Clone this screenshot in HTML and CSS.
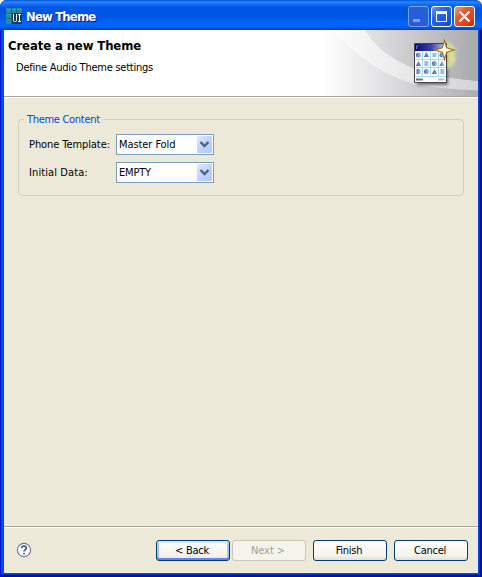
FILE: index.html
```html
<!DOCTYPE html>
<html lang="en">
<head>
<meta charset="utf-8">
<title>New Theme</title>
<link rel="stylesheet" href="styles.css">
</head>
<body>
<div class="window">
  <header class="titlebar">
    <svg class="app-icon" width="17" height="17" viewBox="0 0 17 17">
      <rect width="16" height="16" rx="1" fill="#238da2"/>
      <path d="M0 5.500H16M0 10.500H6M5.500 0V16M10.500 0V5" stroke="#176e89" fill="none"/>
      <path d="M1 1.500h4M6.500 1.500h3M11.500 1.500h3M1 6.500h4" stroke="#3ca5b5"/>
      <rect x="6" y="5" width="10" height="11" fill="#123a5c"/>
      <path d="M7.500 6v6.500q0 1 1 1h1q1 0 1-1V6M12 6.500h3M13.500 6.500v7M12 13.500h3" stroke="#fff" fill="none"/>
    </svg>
    <h1 class="title">New Theme</h1>
    <div class="controls">
      <span class="control minimize"><svg width="21" height="21"><path d="M5 14.500h7" stroke="#7ba2f5" stroke-width="3"/></svg></span>
      <span class="control"><svg width="21" height="21"><path d="M5.500 5.500h10v10h-10z" fill="none" stroke="#fff"/><path d="M5 6.500h11" stroke="#fff" stroke-width="3"/></svg></span>
      <span class="control close"><svg width="21" height="21"><path d="M5.500 5.500l10 10M15.500 5.500l-10 10" stroke="#fff" stroke-width="2.200"/></svg></span>
    </div>
  </header>
  <main class="client">
    <section class="banner">
      <svg class="banner-art" width="154" height="66" viewBox="0 0 154 66">
        <defs>
          <linearGradient id="sky" gradientUnits="userSpaceOnUse" x1="0" y1="0" x2="154" y2="0"><stop offset="0" stop-color="#fff"/><stop offset=".28" stop-color="#e3e3e4"/><stop offset=".6" stop-color="#c7c7ca"/><stop offset="1" stop-color="#a9aaae"/></linearGradient>
          <linearGradient id="low" gradientUnits="userSpaceOnUse" x1="0" y1="0" x2="154" y2="0"><stop offset="0" stop-color="#fff"/><stop offset=".4" stop-color="#e0e0e2"/><stop offset="1" stop-color="#acadb1"/></linearGradient>
          <linearGradient id="band" gradientUnits="userSpaceOnUse" x1="0" y1="0" x2="154" y2="0"><stop offset="0" stop-color="#fff"/><stop offset=".45" stop-color="#ededee"/><stop offset="1" stop-color="#d3d3d6"/></linearGradient>
          <linearGradient id="bar"><stop offset="0" stop-color="#08087b"/><stop offset=".5" stop-color="#3540a0"/><stop offset="1" stop-color="#c4cee9"/></linearGradient>
          <linearGradient id="shape"><stop offset="0" stop-color="#4569bd"/><stop offset="1" stop-color="#b8c6ea"/></linearGradient>
          <linearGradient id="key"><stop offset="0" stop-color="#666"/><stop offset="1" stop-color="#ccc"/></linearGradient>
          <filter id="soft" x="-50%" y="-50%" width="200%" height="200%"><feGaussianBlur stdDeviation="1.500"/></filter>
        </defs>
        <path d="M0 0H154V66H0z" fill="url(#low)"/>
        <path d="M0 0H41C51 17 64 27 91 39C112 47 135 49 154 51V60.500C130 59 108 58 91 54C69 48 52 38 39 28C26 18 14 6 8 0z" fill="url(#band)"/>
        <path d="M41 0H154V51C135 49 112 47 91 39C66 28 51 17 41 0z" fill="url(#sky)"/>
        <path d="M93 17h31v38H93z" fill="#222" opacity=".6" filter="url(#soft)"/>
        <path d="M121 12q8 1 11 8q-3 4 0 8q-1 8-10 12V25z" fill="#f0ef8b" opacity=".65" filter="url(#soft)"/>
        <path d="M90.500 13.500h32v39h-32z" fill="#fff" stroke="#414350"/>
        <path d="M91 14h31v7H91z" fill="url(#bar)"/>
        <path d="M92.500 19v-3h2" stroke="#7778ca" fill="none"/>
        <path d="M91 29.500h31M91 37.500h31M91 46.500h31M98.500 21v25M106.500 21v25M114.500 21v25" stroke="#a9d9ef" fill="none"/>
        <g fill="url(#shape)">
          <circle cx="94.500" cy="25" r="2.600"/><path d="M102.500 22l2.700 5h-5.400zM108.500 23h4v4h-4z"/><circle cx="118" cy="25" r="2.500"/>
          <path d="M94.500 31l2.700 5h-5.400zM100.500 31h4v5h-4z"/><circle cx="110.500" cy="33.500" r="2.600"/><path d="M118 31l2.700 5h-5.400z"/>
          <path d="M92.500 39h4v5h-4z"/><circle cx="102.500" cy="41.500" r="2.600"/><path d="M110.500 39l2.700 5h-5.400zM116.500 39h4v5h-4z"/>
        </g>
        <path d="M92 48.500h7v2h-7zM114 48.500h7v2h-7z" fill="url(#key)"/>
        <path d="M120.500 10.500l2.200 7.300 7.300 2.200-7.300 2.200-2.200 7.300-2.200-7.300L111 20l7.300-2.200z" fill="#fffde5" stroke="#a77314" stroke-width="1.200"/>
      </svg>
      <h2 class="heading">Create a new Theme</h2>
      <p class="description">Define Audio Theme settings</p>
    </section>
    <section class="content">
      <fieldset class="group">
        <legend class="legend">Theme Content</legend>
        <div class="row">
          <span class="label phone">Phone Template:</span>
          <div class="combo"><span class="value">Master Fold</span><i class="arrow"><svg width="15" height="17"><path d="M3.500 6l4 4 4-4" fill="none" stroke="#4d6185" stroke-width="2.400"/></svg></i></div>
        </div>
        <div class="row">
          <span class="label data">Initial Data:</span>
          <div class="combo"><span class="value caps">EMPTY</span><i class="arrow"><svg width="15" height="17"><path d="M3.500 6l4 4 4-4" fill="none" stroke="#4d6185" stroke-width="2.400"/></svg></i></div>
        </div>
      </fieldset>
    </section>
    <footer class="footer">
      <svg class="help" width="16" height="16" viewBox="0 0 16 16"><circle cx="8" cy="8" r="6.600" fill="#fff" stroke="#6d7d9d" stroke-width="1.200"/><path d="M5.700 6.300q0-2.100 2.300-2.100t2.300 1.900q0 1.100-1.200 1.800T8 9.500M8 10.800v1.700" fill="none" stroke="#4a5f88" stroke-width="1.700"/></svg>
      <button class="button default">&lt; Back</button>
      <button class="button next" disabled>Next &gt;</button>
      <button class="button">Finish</button>
      <button class="button">Cancel</button>
    </footer>
  </main>
</div>
</body>
</html>
```
FILE: styles.css
```css
* { box-sizing: border-box; }
body {
  margin: 0;
  background: #fff;
  font: 11px/14px "DejaVu Sans Condensed", "DejaVu Sans", sans-serif;
  letter-spacing: -.3px;
  color: #000;
}
svg { display: block; }
.window {
  width: 482px;
  height: 577px;
  padding: 0 4px 4px;
  display: flex;
  flex-direction: column;
  border-radius: 7px 7px 0 0;
  overflow: hidden;
  background: #0048e8;
  box-shadow: inset 1px 0 #0019cf, inset -2px -2px #00138c, inset -3px -3px #0030cc;
}
.titlebar {
  flex: 0 0 30px;
  margin: 0 -4px;
  padding: 2px 7px 0 6px;
  display: flex;
  align-items: center;
  background: linear-gradient(#0051d5 0, #2c87ff 2px, #1270f8 4px, #0055e5 8px, #0054e3 16px, #0064fb 23px, #0066ff 26px, #0053dd 28px, #003dd0 30px);
}
.title {
  margin: 1px 0 0 3px;
  color: #fff;
  font: bold 13px/16px "DejaVu Sans Condensed", sans-serif;
  letter-spacing: -.85px;
  text-shadow: 1px 1px #0a1883;
}
.controls { display: flex; gap: 2px; margin-left: auto; }
.control {
  width: 21px;
  height: 21px;
  border: 1px solid #fff;
  border-radius: 3px;
  background: linear-gradient(135deg, #6a98f6, #2865e4 35%, #1e59dc 70%, #1648b6);
}
.control svg { margin: -1px; }
.minimize { border-color: #799fee; background: #245edc; }
.close { background: linear-gradient(135deg, #f09a7d, #e35a35 35%, #d9431c 75%, #b42c0b); }
.client { flex: 1; display: flex; flex-direction: column; background: #ece9d8; }
.banner {
  position: relative;
  height: 67px;
  padding: 8px 0 0 4px;
  background: #fff;
  border-bottom: 1px solid #aca899;
}
.banner-art { position: absolute; right: 0; top: 0; }
.heading {
  margin: 0;
  font: bold 13px/16px "DejaVu Sans Condensed", sans-serif;
  letter-spacing: -.12px;
}
.description { margin: 7px 0 0 8px; letter-spacing: -.24px; }
.content { flex: 1; padding: 15px 14px 0; border-top: 1px solid #fff; }
.group {
  margin: 0;
  min-width: 0;
  height: 83px;
  border: 1px solid #d0d0bf;
  border-radius: 4px;
  padding: 9px 10px 0;
}
.legend { height: 12px; margin-left: -5px; padding: 0 3px; color: #0046d5; }
.row { display: flex; align-items: center; height: 21px; margin-bottom: 7px; }
.label { width: 87px; white-space: nowrap; }
.phone { letter-spacing: -.08px; }
.data { letter-spacing: .1px; }
.combo {
  width: 98px;
  height: 21px;
  display: flex;
  align-items: center;
  justify-content: space-between;
  padding: 0 1px 0 2px;
  border: 1px solid #7f9db9;
  background: #fff;
  white-space: nowrap;
}
.value { letter-spacing: -.08px; }
.caps { letter-spacing: -.2px; }
.arrow {
  width: 15px;
  height: 17px;
  border-radius: 1px;
  background: linear-gradient(135deg, #e1eaff, #c1d3fb 50%, #aec8f7);
}
.footer {
  height: 47px;
  display: flex;
  align-items: flex-start;
  padding: 12px 10px 0 12px;
  border-top: 1px solid #aca899;
  box-shadow: inset 0 1px #fff;
}
.help { margin: 3px 124px 0 0; }
.button {
  width: 74px;
  height: 21px;
  margin: 1px 0 0 7px;
  padding: 0 2px 0 0;
  border: 1px solid #003c74;
  border-radius: 3px;
  background: linear-gradient(#fff, #f5f4ee 75%, #e3dfd3);
  color: #000;
  font: inherit;
  letter-spacing: -.25px;
}
.default { margin-left: 0; box-shadow: inset 0 2px #cee7ff, inset 0 -2px #6982ee, inset 2px 0 #a6c4f5, inset -2px 0 #a6c4f5; }
.next { margin-left: 2px; border-color: #c9c7ba; background: #f5f4ea; color: #a1a192; letter-spacing: -.05px; }
```
